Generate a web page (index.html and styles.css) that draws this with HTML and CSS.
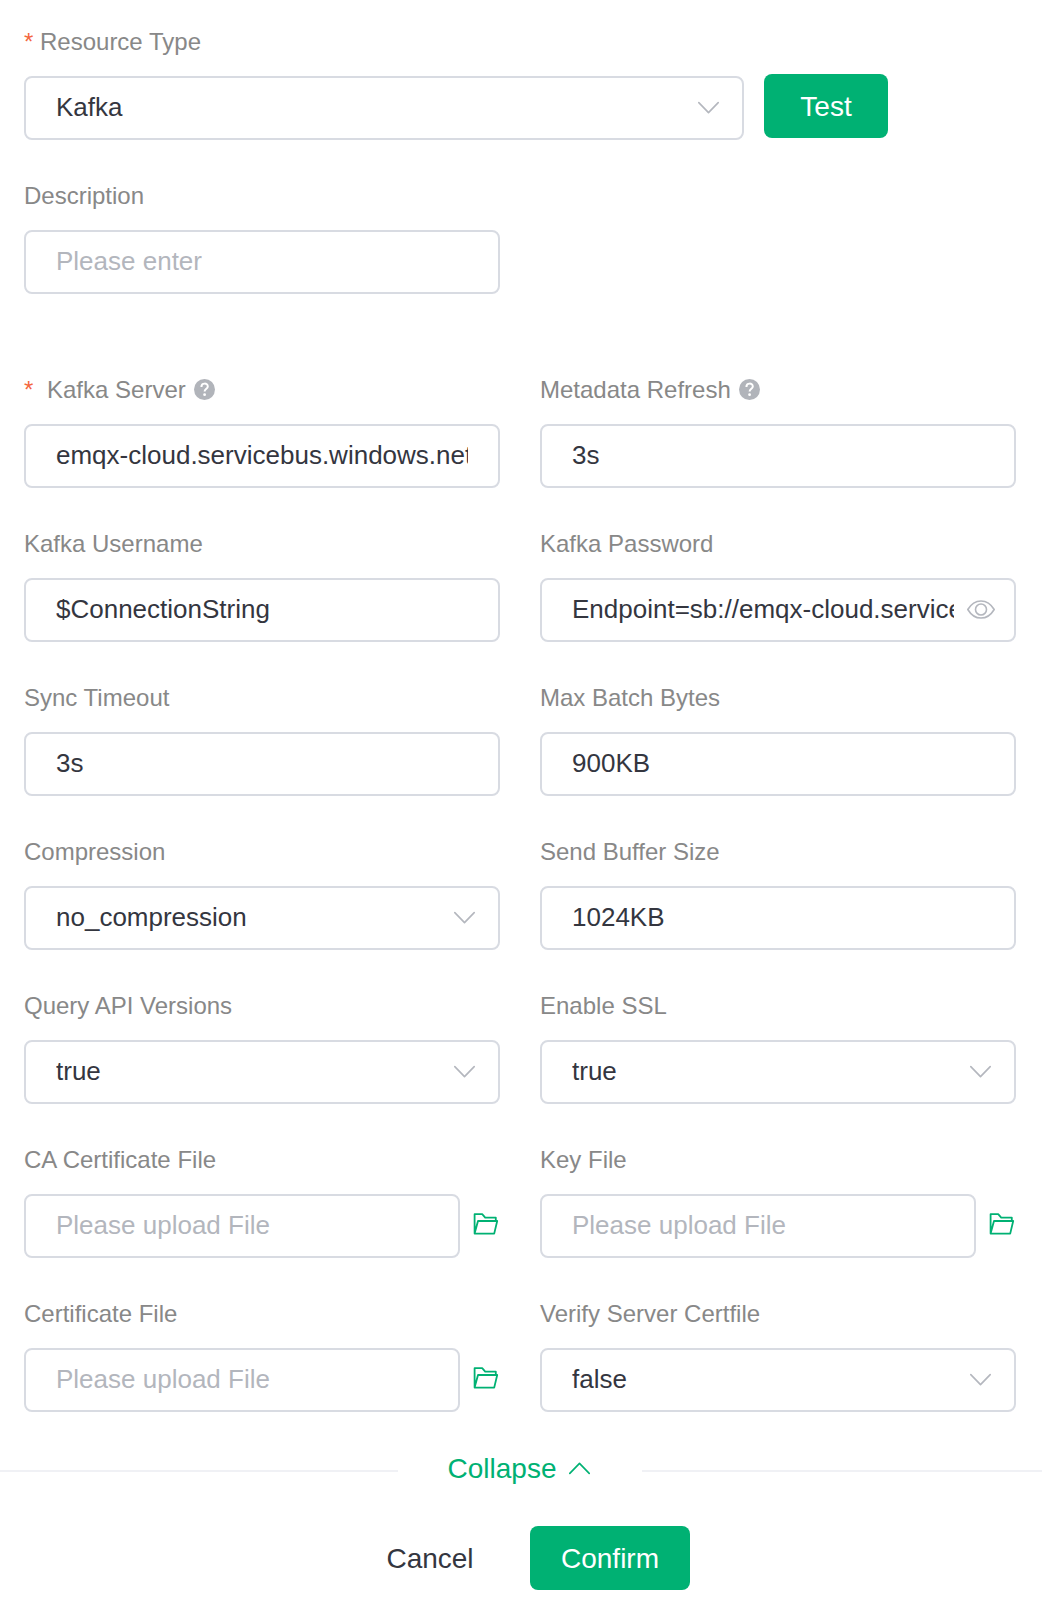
FILE: index.html
```html
<!DOCTYPE html>
<html lang="en">
<head>
<meta charset="utf-8">
<title>Create Resource</title>
<link rel="stylesheet" href="styles.css">
</head>
<body>
<svg class="sprite" aria-hidden="true">
  <symbol id="chevron" viewBox="0 0 22 14"><path d="M1.8 1.6 L11.5 11.6 L21.2 1.6" fill="none" stroke="currentColor" stroke-width="1.6" stroke-linecap="round" stroke-linejoin="round"/></symbol>
  <symbol id="help" viewBox="0 0 21 21"><circle cx="10.5" cy="10.5" r="10.5" fill="currentColor"/><path d="M7.4 7.9 C7.4 3.5 13.8 3.7 13.8 7.5 C13.8 9.7 10.6 9.9 10.6 12.6" fill="none" stroke="#fff" stroke-width="2"/><circle cx="10.6" cy="15.7" r="1.4" fill="#fff"/></symbol>
  <symbol id="eye" viewBox="0 0 30 22"><path d="M1.8 11 C8.6 -0.4 21.4 -0.4 28.2 11 C21.4 22.4 8.6 22.4 1.8 11 Z" transform="translate(0 -.5)" fill="none" stroke="currentColor" stroke-width="1.6" stroke-linejoin="round"/><circle cx="15" cy="10.5" r="5.5" fill="none" stroke="currentColor" stroke-width="1.6"/></symbol>
  <symbol id="folder" viewBox="0 0 26 22"><path d="M1.6 20.6 V1.2 H9.2 L12.2 4.6 H22.8 V8 M1.6 20.6 L5 8 H24.2 L21.2 20.6 Z" fill="none" stroke="currentColor" stroke-width="1.8" stroke-linejoin="round"/></symbol>
</svg>
<main class="form">
  <section class="item">
    <div class="label"><span class="required">*</span>Resource Type</div>
    <div class="resource-row">
      <div class="control resource-select"><span class="value">Kafka</span><svg class="chevron"><use href="#chevron"/></svg></div>
      <button class="button test">Test</button>
    </div>
  </section>
  <section class="item description">
    <div class="label">Description</div>
    <div class="control"><span class="value placeholder">Please enter</span></div>
  </section>
  <div class="grid">
    <section class="item">
      <div class="label"><span class="required wide">*</span>Kafka Server<svg class="help"><use href="#help"/></svg></div>
      <div class="control"><span class="value">emqx-cloud.servicebus.windows.net</span></div>
    </section>
    <section class="item">
      <div class="label">Metadata Refresh<svg class="help"><use href="#help"/></svg></div>
      <div class="control"><span class="value">3s</span></div>
    </section>
    <section class="item">
      <div class="label">Kafka Username</div>
      <div class="control"><span class="value">$ConnectionString</span></div>
    </section>
    <section class="item">
      <div class="label">Kafka Password</div>
      <div class="control password"><span class="value">Endpoint=sb://emqx-cloud.service</span><svg class="eye"><use href="#eye"/></svg></div>
    </section>
    <section class="item">
      <div class="label">Sync Timeout</div>
      <div class="control"><span class="value">3s</span></div>
    </section>
    <section class="item">
      <div class="label">Max Batch Bytes</div>
      <div class="control"><span class="value">900KB</span></div>
    </section>
    <section class="item">
      <div class="label">Compression</div>
      <div class="control"><span class="value">no_compression</span><svg class="chevron"><use href="#chevron"/></svg></div>
    </section>
    <section class="item">
      <div class="label">Send Buffer Size</div>
      <div class="control"><span class="value">1024KB</span></div>
    </section>
    <section class="item">
      <div class="label">Query API Versions</div>
      <div class="control"><span class="value">true</span><svg class="chevron"><use href="#chevron"/></svg></div>
    </section>
    <section class="item">
      <div class="label">Enable SSL</div>
      <div class="control"><span class="value">true</span><svg class="chevron"><use href="#chevron"/></svg></div>
    </section>
    <section class="item">
      <div class="label">CA Certificate File</div>
      <div class="upload"><div class="control"><span class="value placeholder">Please upload File</span></div><svg class="folder"><use href="#folder"/></svg></div>
    </section>
    <section class="item">
      <div class="label">Key File</div>
      <div class="upload"><div class="control"><span class="value placeholder">Please upload File</span></div><svg class="folder"><use href="#folder"/></svg></div>
    </section>
    <section class="item">
      <div class="label">Certificate File</div>
      <div class="upload"><div class="control"><span class="value placeholder">Please upload File</span></div><svg class="folder"><use href="#folder"/></svg></div>
    </section>
    <section class="item">
      <div class="label">Verify Server Certfile</div>
      <div class="control"><span class="value">false</span><svg class="chevron"><use href="#chevron"/></svg></div>
    </section>
  </div>
</main>
<div class="divider"><div class="collapse">Collapse<svg class="chevron up"><use href="#chevron"/></svg></div></div>
<footer class="actions">
  <button class="button cancel">Cancel</button>
  <button class="button confirm">Confirm</button>
</footer>
</body>
</html>
```
FILE: styles.css
```css
* { box-sizing: border-box; }
body {
  margin: 0;
  background: #fff;
  font-family: "Liberation Sans", Arial, Helvetica, sans-serif;
  color: #34363f;
}
.sprite { display: none; }
.form { padding: 28px 42px 0 24px; }
.item { margin-bottom: 42px; }
.label {
  display: flex;
  align-items: center;
  height: 28px;
  margin-bottom: 20px;
  font-size: 24px;
  line-height: 28px;
  white-space: nowrap;
  color: #888;
}
.required { width: 16px; color: #f4673f; }
.required.wide { width: 23px; }
.help { width: 21px; height: 21px; margin: -2px 0 0 8px; color: #b1b4ba; }
.control {
  display: flex;
  align-items: center;
  height: 64px;
  padding: 0 23px 2px 30px;
  border: 2px solid #d8dbe2;
  border-radius: 8px;
  font-size: 26px;
}
.value {
  flex: 1;
  min-width: 0;
  margin-right: 7px;
  overflow: hidden;
  white-space: nowrap;
  line-height: 36px;
}
.placeholder { color: #b3b6bd; }
.chevron { flex: none; width: 22px; height: 14px; margin-top: 2px; color: #b4b7be; }
.resource-row { display: flex; gap: 20px; }
.resource-select { width: 720px; }
.button {
  height: 64px;
  padding: 2px 0 0;
  border: 0;
  border-radius: 8px;
  font: 28px "Liberation Sans", Arial, Helvetica, sans-serif;
  color: #fff;
  background: #00b173;
}
.test { width: 124px; margin: -2px 0 2px; }
.description { width: 476px; margin-bottom: 82px; }
.grid { display: grid; grid-template-columns: 476px 476px; column-gap: 40px; }
.password { padding-right: 18px; }
.password .value { margin-right: 12px; }
.eye { flex: none; width: 30px; height: 22px; margin-top: 1px; color: #b4b7be; }
.upload { display: flex; align-items: center; }
.upload .control { width: 436px; }
.folder { width: 26px; height: 22px; margin: -5px 0 0 13px; color: #00b173; }
.divider { display: flex; align-items: center; height: 34px; padding-right: 16px; }
.divider::before, .divider::after { content: ""; height: 2px; background: #f0f1f5; }
.divider::before { width: 398px; }
.divider::after { flex: 1; }
.collapse {
  display: flex;
  align-items: center;
  justify-content: center;
  gap: 12px;
  width: 244px;
  padding: 0 2px 5px 0;
  font-size: 28px;
  color: #00b173;
}
.up { margin: -2px 0 0; color: #00b173; transform: scaleY(-1); }
.actions { display: flex; margin-top: 38px; padding-left: 330px; }
.cancel { width: 200px; color: #34363f; background: none; }
.confirm { width: 160px; }
```
